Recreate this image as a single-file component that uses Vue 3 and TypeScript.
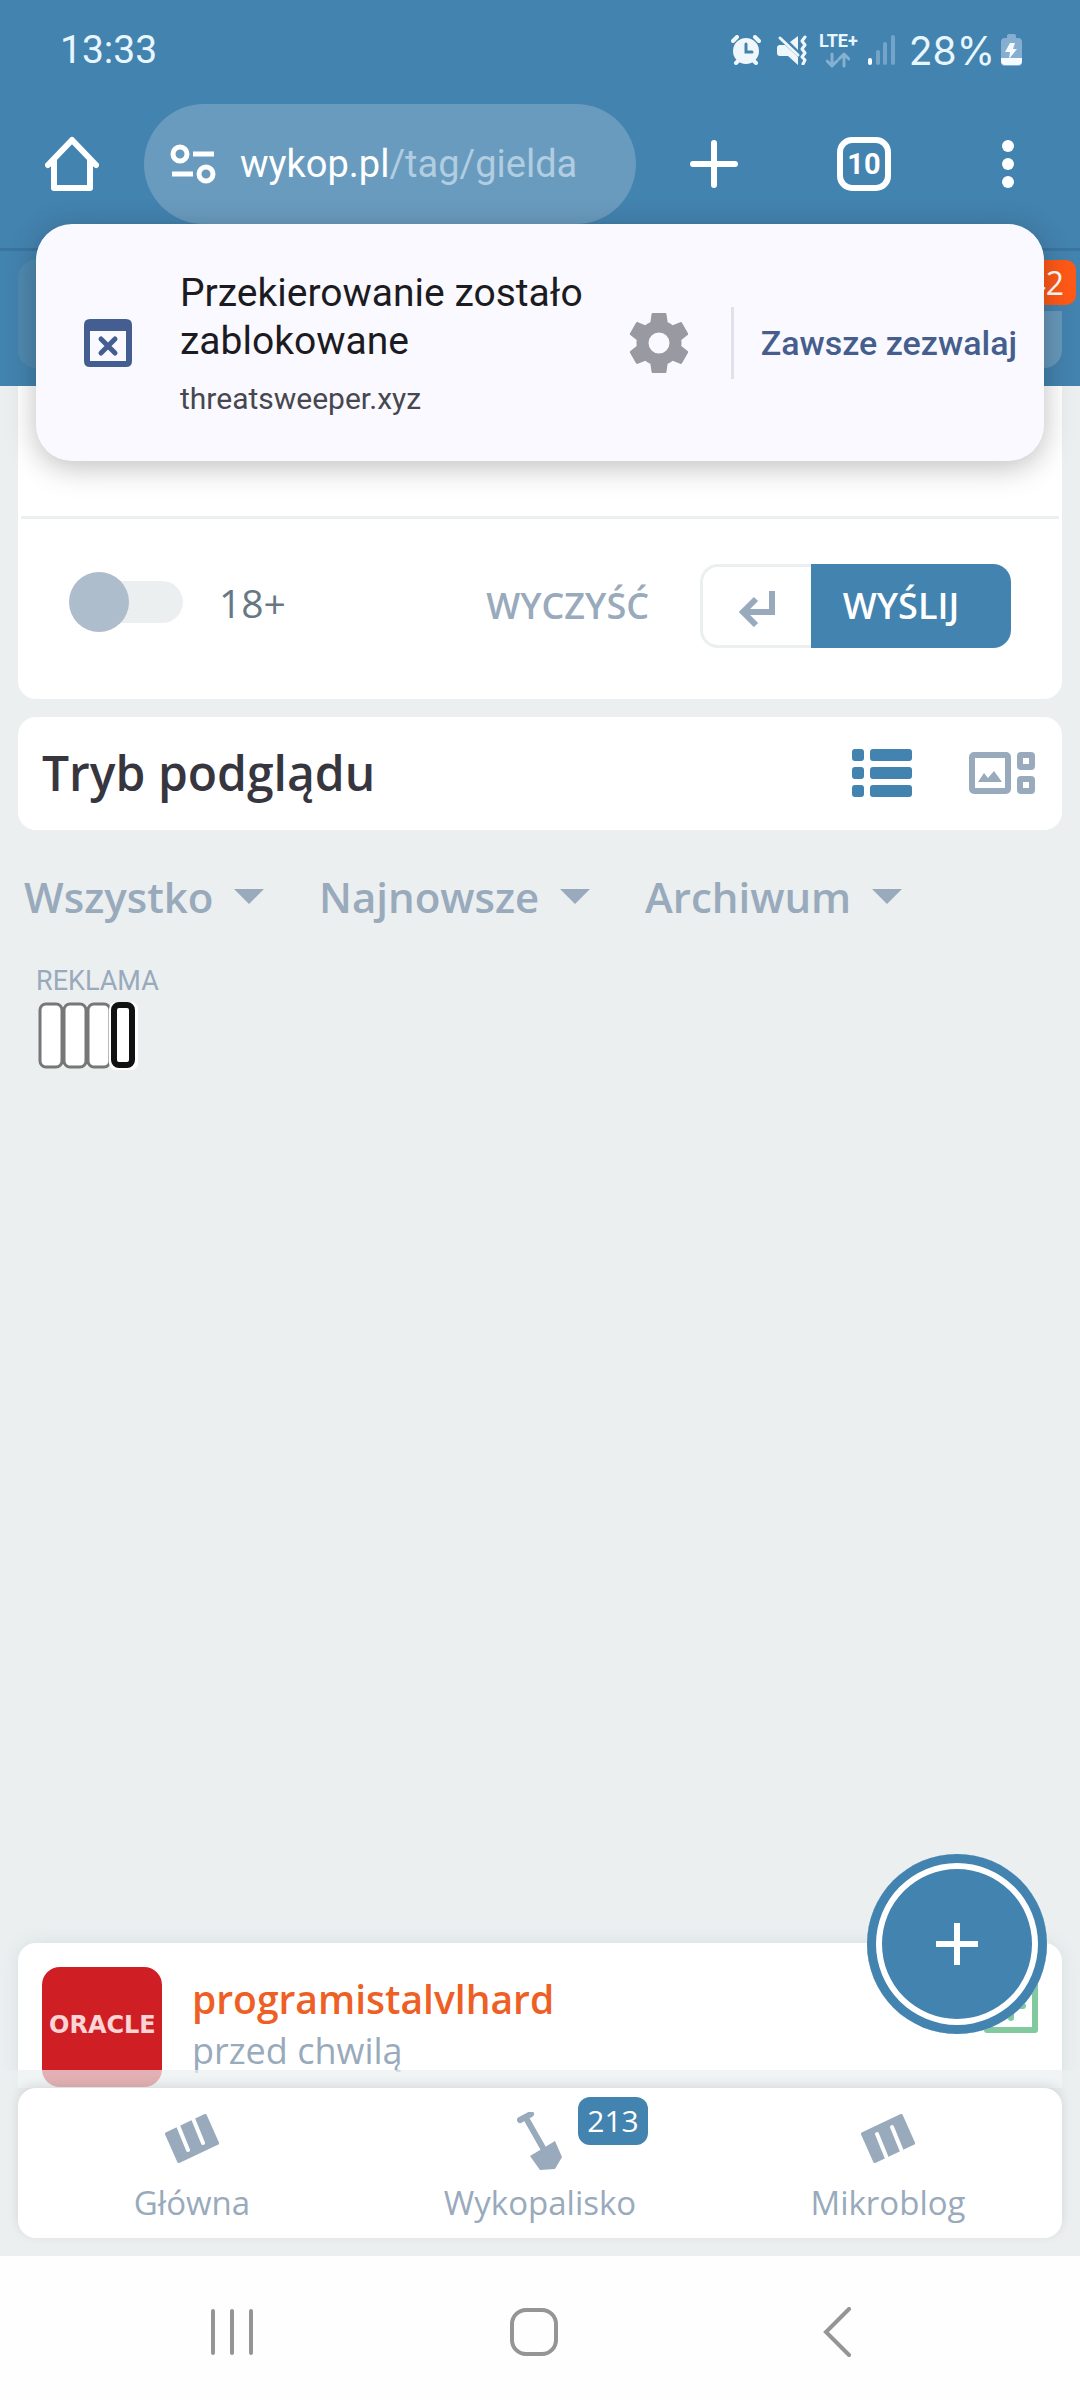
<script setup lang="ts">
import { ref } from 'vue'

interface Filter {
  id: string
  label: string
}

const filters: Filter[] = [
  { id: 'type', label: 'Wszystko' },
  { id: 'sort', label: 'Najnowsze' },
  { id: 'archive', label: 'Archiwum' },
]

const adult = ref(false)
const draft = ref('')
</script>

<template>
  <div class="screen">
    <header class="top">
      <div class="status">
        <span class="clock">13:33</span>
        <div class="indicators">
          <svg class="alarm" width="30" height="30" viewBox="0 0 30 30" aria-hidden="true">
            <circle cx="15" cy="16" r="13" fill="#eff6fc" />
            <path d="M2 6 6 2M28 6 24 2M5 28l3-3M25 28l-3-3" stroke="#eff6fc" stroke-width="4" stroke-linecap="round" />
            <path d="M15 9v8h6" fill="none" stroke="#4383af" stroke-width="3" stroke-linecap="round" />
          </svg>
          <svg class="mute" width="30" height="30" viewBox="0 0 30 30" aria-hidden="true">
            <path d="M3 10h5l13 12v8l-10-9H3q-3 0-3-3v-5q0-3 3-3zM13 7l8-6v14z" fill="#eff6fc" />
            <path d="M3 3l18 17" stroke="#eff6fc" stroke-width="3" stroke-linecap="round" />
            <path d="M28 2l-3 4 3 4-3 4 3 4-3 4 3 3-2 4" fill="none" stroke="#eff6fc" stroke-width="3" stroke-linecap="round" stroke-linejoin="round" />
          </svg>
          <div class="network">
            <span>LTE+</span>
            <svg width="24" height="16" viewBox="0 0 24 16" fill="none" stroke="#86b0d0" stroke-width="3" stroke-linecap="round" stroke-linejoin="round" aria-hidden="true">
              <path d="M6 2v12M1 9l5 5 5-5M18 14V2M13 7l5-5 5 5" />
            </svg>
          </div>
          <svg class="signal" width="27" height="30" viewBox="0 0 27 30" stroke="#74a4c8" stroke-width="4" stroke-linecap="round" aria-hidden="true">
            <path d="M2 25v3" stroke="#fff" />
            <path d="M10 17v11M17 9v19M25 2v26" />
          </svg>
          <span class="percent">28%</span>
          <svg class="battery" width="21" height="32" viewBox="0 0 21 32" aria-hidden="true">
            <path d="M6 4V2q0-2 2-2h5q2 0 2 2v2h2q4 0 4 4v20q0 4-4 4H4q-4 0-4-4V8q0-4 4-4z" fill="#86aed0" />
            <path d="M0 24h21v3q0 4-4 4H4q-4 0-4-4z" fill="#f5faff" />
            <path d="M9 9h5l-2 6h4l-8 10 1-7H4z" fill="#f5faff" />
          </svg>
        </div>
      </div>

      <div class="toolbar">
        <button class="icon-btn home" aria-label="Strona startowa">
          <svg width="54" height="56" viewBox="0 0 54 56" fill="none" stroke="#fff" stroke-width="6" stroke-linecap="round" stroke-linejoin="round">
            <path d="M3 29 27 4l24 25M9 24v28h36V24" />
          </svg>
        </button>
        <button class="address">
          <svg width="46" height="40" viewBox="0 0 46 40" fill="none" stroke="#fff" aria-hidden="true">
            <circle cx="10" cy="10" r="7" stroke-width="5" />
            <circle cx="36" cy="30" r="7" stroke-width="5" />
            <path d="M23 10h21M2 30h21" stroke-width="5" />
          </svg>
          <span class="url">wykop.pl<span class="path">/tag/gielda</span></span>
        </button>
        <div class="tools">
          <button class="icon-btn" aria-label="Nowa karta">
            <svg width="54" height="54" viewBox="0 0 54 54" stroke="#fff" stroke-width="6" stroke-linecap="round">
              <path d="M27 6v42M6 27h42" />
            </svg>
          </button>
          <button class="icon-btn tabs" aria-label="Karty">10</button>
          <button class="icon-btn" aria-label="Menu">
            <svg width="42" height="54" viewBox="0 0 42 54" fill="#fff">
              <circle cx="21" cy="9" r="6" /><circle cx="21" cy="27" r="6" /><circle cx="21" cy="45" r="6" />
            </svg>
          </button>
        </div>
      </div>

      <div class="site-bar">
        <div class="site-search"></div>
        <div class="site-profile"><span class="alerts">42</span></div>
      </div>
    </header>

    <aside class="blocked">
      <svg class="blocked-icon" width="48" height="48" viewBox="0 0 48 48" aria-hidden="true">
        <path d="M6 0h36q6 0 6 6v36q0 6-6 6H6q-6 0-6-6V6q0-6 6-6zM6 12v30h36V12z" fill="#455e91" fill-rule="evenodd" />
        <path d="M17 20l14 14M31 20 17 34" stroke="#455e91" stroke-width="5" stroke-linecap="round" />
      </svg>
      <div class="blocked-text">
        <p class="blocked-title">Przekierowanie zostało zablokowane</p>
        <p class="blocked-host">threatsweeper.xyz</p>
      </div>
      <button class="icon-btn" aria-label="Ustawienia">
        <svg width="72" height="72" viewBox="0 0 24 24" fill="#9899a1">
          <path d="M19.43 12.98c.04-.32.07-.64.07-.98s-.03-.66-.07-.98l2.11-1.65c.19-.15.24-.42.12-.64l-2-3.46c-.12-.22-.39-.3-.61-.22l-2.49 1c-.52-.4-1.08-.73-1.69-.98l-.38-2.65C14.46 2.18 14.25 2 14 2h-4c-.25 0-.46.18-.49.42l-.38 2.65c-.61.25-1.17.59-1.69.98l-2.49-1c-.23-.09-.49 0-.61.22l-2 3.46c-.13.22-.07.49.12.64l2.11 1.65c-.04.32-.07.65-.07.98s.03.66.07.98l-2.11 1.65c-.19.15-.24.42-.12.64l2 3.46c.12.22.39.3.61.22l2.49-1c.52.4 1.08.73 1.69.98l.38 2.65c.03.24.24.42.49.42h4c.25 0 .46-.18.49-.42l.38-2.65c.61-.25 1.17-.59 1.69-.98l2.49 1c.23.09.49 0 .61-.22l2-3.46c.12-.22.07-.49-.12-.64l-2.11-1.65zM12 15.5a3.5 3.5 0 1 1 0-7 3.5 3.5 0 0 1 0 7z" />
        </svg>
      </button>
      <span class="blocked-divider"></span>
      <button class="allow">Zawsze zezwalaj</button>
    </aside>

    <main class="page">
      <form class="card composer" @submit.prevent>
        <textarea v-model="draft" class="draft" aria-label="Treść wpisu"></textarea>
        <div class="composer-actions">
          <label class="adult">
            <input v-model="adult" type="checkbox" class="switch" />
            <span>18+</span>
          </label>
          <button type="reset" class="clear">WYCZYŚĆ</button>
          <div class="send-group">
            <button type="button" class="newline" aria-label="Nowa linia">
              <svg width="36" height="36" viewBox="0 0 36 36" fill="none" stroke="#98aabb" stroke-width="6">
                <path d="M33 0v21H6M17 8 4 21l13 13" />
              </svg>
            </button>
            <button type="submit" class="send">WYŚLIJ</button>
          </div>
        </div>
      </form>

      <section class="card view-mode">
        <h2>Tryb podglądu</h2>
        <div class="view-buttons">
          <button class="icon-btn" aria-label="Lista">
            <svg width="60" height="48" viewBox="0 0 60 48" fill="#4383af">
              <rect width="12" height="12" rx="3" /><rect x="18" width="42" height="12" rx="3" />
              <rect y="18" width="12" height="12" rx="3" /><rect x="18" y="18" width="42" height="12" rx="3" />
              <rect y="36" width="12" height="12" rx="3" /><rect x="18" y="36" width="42" height="12" rx="3" />
            </svg>
          </button>
          <button class="icon-btn" aria-label="Galeria">
            <svg width="66" height="42" viewBox="0 0 66 42" fill="none" stroke="#98aabb" stroke-width="6">
              <rect x="3" y="3" width="36" height="36" rx="2" />
              <rect x="51" y="3" width="12" height="12" rx="1" />
              <rect x="51" y="27" width="12" height="12" rx="1" />
              <path d="M9 30l6-9 4 5 6-7 8 11z" fill="#98aabb" stroke="none" />
            </svg>
          </button>
        </div>
      </section>

      <nav class="filters" aria-label="Filtry">
        <label v-for="f in filters" :key="f.id" class="filter">
          <select :aria-label="f.label">
            <option>{{ f.label }}</option>
          </select>
          <svg width="30" height="15" viewBox="0 0 30 15" aria-hidden="true"><path d="M0 0h30L15 15z" fill="#98aabb" /></svg>
        </label>
      </nav>

      <section class="ad">
        <span class="ad-label">REKLAMA</span>
        <svg width="102" height="69" viewBox="0 0 102 69" aria-hidden="true">
          <g fill="#fff" stroke="#777" stroke-width="3">
            <rect x="4" y="2" width="22" height="63" rx="6" />
            <rect x="28" y="2" width="22" height="63" rx="6" />
            <rect x="52" y="2" width="22" height="63" rx="6" />
          </g>
          <rect x="73" y="0" width="29" height="68" rx="7" fill="#fff" />
          <rect x="78" y="3" width="18" height="60" rx="5" fill="#fff" stroke="#111" stroke-width="6" />
        </svg>
      </section>

      <article class="card post">
        <svg class="avatar" width="120" height="120" viewBox="0 0 120 120" role="img" aria-label="Oracle">
          <rect width="120" height="120" rx="18" fill="#cf1f25" />
          <text x="7" y="66" class="avatar-text">ORACLE</text>
        </svg>
        <div class="author">
          <a href="#" class="name">programistalvlhard</a>
          <span class="time">przed chwilą</span>
        </div>
        <button class="icon-btn vote" aria-label="Plusuj">
          <svg width="54" height="54" viewBox="0 0 54 54" fill="none" stroke="#83c99e" stroke-width="6" stroke-linejoin="round">
            <rect x="3" y="3" width="48" height="48" /><path d="M27 15v24M15 27h24" stroke-linecap="round" />
          </svg>
        </button>
        <button class="fab" aria-label="Dodaj">
          <svg width="42" height="42" viewBox="0 0 42 42" stroke="#fff" stroke-width="6"><path d="M21 0v42M0 21h42" /></svg>
        </button>
      </article>
    </main>

    <div class="dock">
      <nav class="dock-nav">
        <a href="#">
          <svg width="54" height="50" viewBox="0 0 54 50" aria-hidden="true">
            <path d="M2 20 14 47 52 29 40 2z" fill="#98aabb" stroke="#98aabb" stroke-width="4" stroke-linejoin="round" />
            <path d="M12 9l11 27M27 2l11 27" stroke="#fff" stroke-width="4" stroke-linecap="round" />
          </svg>
          Główna
        </a>
        <a href="#">
          <span class="with-count">
            <svg width="46" height="58" viewBox="0 0 46 58" aria-hidden="true">
              <path d="M3 8 14 2M9 6l17 30" stroke="#98aabb" stroke-width="6" stroke-linecap="round" />
              <path d="M13 44 38 29l7 16-7 12-15 1z" fill="#98aabb" />
            </svg>
            <span class="count">213</span>
          </span>
          Wykopalisko
        </a>
        <a href="#">
          <svg width="54" height="50" viewBox="0 0 54 50" aria-hidden="true">
            <g transform="rotate(180 27 24.5)">
              <path d="M2 20 14 47 52 29 40 2z" fill="#98aabb" stroke="#98aabb" stroke-width="4" stroke-linejoin="round" />
              <path d="M12 9l11 27M27 2l11 27" stroke="#fff" stroke-width="4" stroke-linecap="round" />
            </g>
          </svg>
          Mikroblog
        </a>
      </nav>
    </div>

    <footer class="system-nav">
      <button class="icon-btn" aria-label="Ostatnie">
        <svg width="44" height="48" viewBox="0 0 44 48" stroke="#959595" stroke-width="4" stroke-linecap="round"><path d="M3 3v42M22 3v42M41 3v42" /></svg>
      </button>
      <button class="icon-btn" aria-label="Ekran główny">
        <svg width="48" height="48" viewBox="0 0 48 48" fill="none" stroke="#959595" stroke-width="4"><rect x="2" y="2" width="44" height="44" rx="14" /></svg>
      </button>
      <button class="icon-btn" aria-label="Wstecz">
        <svg width="48" height="50" viewBox="0 0 48 50" fill="none" stroke="#959595" stroke-width="4" stroke-linecap="round"><path d="M35 2 12 25l23 23" /></svg>
      </button>
    </footer>
  </div>
</template>

<style>
body {
  margin: 0;
}
</style>

<style scoped>
.screen {
  position: relative;
  display: flex;
  flex-direction: column;
  min-height: 100vh;
  background: #ebeff0;
  font-family: "Open Sans", "Noto Sans", sans-serif;
  overflow: hidden;
}
.screen * {
  box-sizing: border-box;
}
button,
select,
textarea {
  border: 0;
  margin: 0;
  padding: 0;
  background: none;
  color: inherit;
  font: inherit;
}
svg {
  display: block;
  flex: none;
}
p,
h2 {
  margin: 0;
}
a {
  text-decoration: none;
}
.icon-btn {
  flex: none;
}

/* Browser chrome */
.top {
  background: #4383af;
  color: #fff;
}
.status {
  display: flex;
  align-items: center;
  justify-content: space-between;
  height: 100px;
  padding: 0 58px 0 60px;
  font-family: Roboto, sans-serif;
  font-size: 39px;
  color: #e8f6ff;
}
.indicators {
  display: flex;
  align-items: center;
}
.mute {
  margin-left: 16px;
}
.network {
  display: flex;
  flex-direction: column;
  align-items: center;
  gap: 2px;
  margin: 0 10px 0 12px;
  font-size: 18px;
  font-weight: 700;
  line-height: 18px;
}
.percent {
  margin: 0 6px 0 14px;
  font-family: Inter, sans-serif;
}
.toolbar {
  display: flex;
  align-items: flex-start;
  height: 151px;
  padding: 4px 51px 0 45px;
  border-bottom: 3px solid #3a759f;
}
.toolbar > .icon-btn,
.tools {
  display: flex;
  align-items: center;
  height: 120px;
}
.address {
  display: flex;
  flex: 1 1 0;
  align-items: center;
  gap: 24px;
  height: 120px;
  margin: 0 51px 0 45px;
  padding: 0 26px;
  border-radius: 60px;
  background: #699bbe;
  font-family: Roboto, sans-serif;
  font-size: 38px;
}
.path {
  color: #b0cde1;
}
.tools {
  gap: 96px;
}
.tabs {
  width: 54px;
  height: 54px;
  border: 6px solid #fff;
  border-radius: 15px;
  font: 700 29px/42px Roboto, sans-serif;
}
.site-bar {
  display: flex;
  height: 135px;
  padding: 9px 18px 18px;
}
.site-search {
  flex: 1;
  border-radius: 18px;
  background: #5089b0;
}
.site-profile {
  position: relative;
  width: 108px;
  margin-left: 18px;
  border-radius: 18px;
  background: #6698ba;
}
.alerts {
  position: absolute;
  top: 0;
  right: -14px;
  height: 45px;
  padding: 0 12px;
  border-radius: 10px;
  background: #ff5917;
  box-shadow: 0 0 0 6px #4383af;
  font-size: 32px;
  line-height: 45px;
}

/* Redirect notice */
.blocked {
  position: absolute;
  z-index: 2;
  top: 224px;
  left: 36px;
  right: 36px;
  display: flex;
  align-items: center;
  height: 237px;
  padding: 0 27px 0 48px;
  border-radius: 36px;
  background: #faf9ff;
  box-shadow: 0 6px 30px rgba(0, 0, 0, 0.26);
  font-family: Roboto, sans-serif;
  color: #1b1b21;
}
.blocked-text {
  flex: 1;
  margin: 0 15px 0 48px;
  padding-top: 4px;
}
.blocked-title {
  font-size: 39px;
  line-height: 48px;
}
.blocked-host {
  margin-top: 13px;
  font-size: 30px;
  line-height: 42px;
  color: #46474f;
}
.blocked-divider {
  width: 3px;
  height: 72px;
  margin: 0 27px 0 36px;
  background: #e1e1eb;
}
.allow {
  font-size: 34px;
  font-weight: 500;
  color: #455e8d;
  white-space: nowrap;
}

/* Page */
.page {
  display: flex;
  flex: 1;
  flex-direction: column;
  padding: 0 18px;
}
.card {
  border-radius: 18px;
  background: #fff;
}
.composer {
  display: flex;
  flex-direction: column;
  border-radius: 0 0 18px 18px;
}
.draft {
  height: 130px;
  resize: none;
}
.composer-actions {
  display: flex;
  align-items: flex-start;
  height: 183px;
  margin: 0 3px;
  padding: 45px 48px 0;
  border-top: 3px solid #ebeff0;
}
.adult {
  display: flex;
  flex: 1;
  align-items: center;
  gap: 36px;
  height: 76px;
  font-size: 39px;
  color: #667785;
}
.switch {
  position: relative;
  width: 114px;
  height: 60px;
  margin: 0;
  appearance: none;
}
.switch::before {
  content: "";
  position: absolute;
  inset: 9px 0 9px 6px;
  border-radius: 21px;
  background: #ebeff0;
}
.switch::after {
  content: "";
  position: absolute;
  top: 0;
  left: 0;
  width: 60px;
  height: 60px;
  border-radius: 50%;
  background: #aebdcc;
}
.clear,
.send {
  height: 84px;
  padding-bottom: 2px;
  font-size: 36px;
  font-weight: 600;
}
.clear {
  margin-right: 51px;
  color: #98aabb;
}
.send-group {
  display: flex;
}
.newline {
  display: flex;
  align-items: center;
  width: 111px;
  height: 84px;
  padding: 6px 0 0 36px;
  border: 3px solid #ebeff0;
  border-right: 0;
  border-radius: 18px 0 0 18px;
}
.send {
  width: 200px;
  padding-right: 20px;
  border-radius: 0 18px 18px 0;
  background: #4383af;
  color: #fff;
}
.view-mode {
  display: flex;
  align-items: center;
  justify-content: space-between;
  height: 113px;
  margin-top: 18px;
  padding: 0 27px 2px 24px;
}
.view-mode h2 {
  font-size: 48px;
  font-weight: 600;
  line-height: 60px;
  color: #37363f;
}
.view-buttons {
  display: flex;
  align-items: center;
  gap: 57px;
}
.filters {
  display: flex;
  gap: 55px;
  margin-top: 35px;
  padding-left: 6px;
}
.filter {
  display: flex;
  align-items: center;
  gap: 20px;
  height: 62px;
  font-size: 42px;
  font-weight: 600;
  color: #98aabb;
}
.filter select {
  height: 62px;
  appearance: none;
}
.ad {
  flex: 1;
  padding: 33px 18px 0;
}
.ad-label {
  display: block;
  font-family: Roboto, sans-serif;
  font-size: 27px;
  line-height: 42px;
  color: #98aabb;
}
.post {
  position: relative;
  display: flex;
  align-items: flex-start;
  height: 145px;
  padding: 24px 24px 0;
  border-radius: 18px 18px 0 0;
  box-shadow: 0 0 18px rgba(60, 90, 110, 0.1);
}
.avatar-text {
  font: 700 24px "DejaVu Sans", sans-serif;
  fill: #fbd5d6;
}
.author {
  display: flex;
  flex: 1;
  flex-direction: column;
  margin-left: 30px;
  padding-top: 5px;
}
.name {
  font-size: 39px;
  font-weight: 600;
  line-height: 54px;
  color: #ee5f25;
}
.time {
  font-size: 36px;
  line-height: 50px;
  color: #98aabb;
}
.vote {
  margin-top: 12px;
}
.fab {
  position: absolute;
  top: -89px;
  right: 15px;
  display: flex;
  align-items: center;
  justify-content: center;
  width: 180px;
  height: 180px;
  border-radius: 50%;
  background: #4383af;
  box-shadow: inset 0 0 0 9px #4383af, inset 0 0 0 15px #fff;
}

/* Bottom bars */
.dock {
  position: relative;
  z-index: 1;
  margin-top: -18px;
  padding: 18px;
  background: rgba(235, 239, 240, 0.7);
}
.dock-nav {
  display: grid;
  grid-template-columns: repeat(3, 1fr);
  height: 150px;
  border-radius: 18px;
  background: #fff;
  box-shadow: 0 -3px 12px rgba(0, 0, 0, 0.1);
}
.dock-nav a {
  display: flex;
  flex-direction: column;
  align-items: center;
  justify-content: space-between;
  padding: 26px 0 12px;
  font-size: 33px;
  line-height: 46px;
  color: #98aabb;
}
.with-count {
  position: relative;
  margin-top: -2px;
}
.count {
  position: absolute;
  top: -15px;
  left: 61px;
  width: 70px;
  border-radius: 12px;
  background: #4383af;
  font-size: 30px;
  line-height: 48px;
  text-align: center;
  color: #fff;
}
.system-nav {
  display: flex;
  align-items: center;
  justify-content: space-between;
  height: 144px;
  padding: 8px 218px 0 210px;
  background: #fefefe;
}
</style>
